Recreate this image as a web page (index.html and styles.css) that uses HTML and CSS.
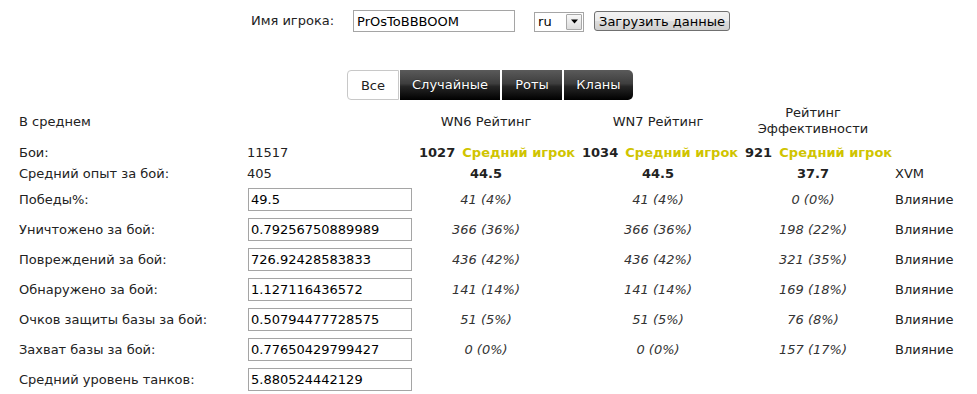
FILE: index.html
```html
<!DOCTYPE html>
<html lang="ru">
<head>
    <meta charset="UTF-8">
    <meta name="viewport" content="width=device-width, initial-scale=1.0">
    <title>Статистика игрока</title>
    <link rel="stylesheet" href="styles.css">
</head>
<body>
    <div class="page">
        <div class="player-form">
            <label class="form-label" for="player">Имя игрока:</label>
            <input class="player-input" type="text" id="player" value="PrOsToBBBOOM">
            <div class="server-select">
                <select id="server">
                    <option>ru</option>
                    <option>eu</option>
                    <option>com</option>
                </select>
                <span class="select-arrow">
                    <svg width="9" height="5" viewBox="0 0 9 5"><path d="M1 0.5h7l-3.5 4z" fill="#000"/></svg>
                </span>
            </div>
            <button class="load-button">Загрузить данные</button>
        </div>

        <div class="tabs">
            <div class="tab active">Все</div>
            <div class="tab random">Случайные</div>
            <div class="tab companies">Роты</div>
            <div class="tab clans">Кланы</div>
        </div>

        <div class="stats">
            <div class="row head-row">
                <div class="cell">В среднем</div>
                <div class="cell"></div>
                <div class="cell center">WN6 Рейтинг</div>
                <div class="cell center">WN7 Рейтинг</div>
                <div class="cell center two-line">Рейтинг<br>Эффективности</div>
                <div class="cell"></div>
            </div>
            <div class="row short-row">
                <div class="cell">Бои:</div>
                <div class="cell">11517</div>
                <div class="cell ratings">
                    <span class="rating"><b>1027</b> <span class="level">Средний игрок</span></span>
                    <span class="rating"><b>1034</b> <span class="level">Средний игрок</span></span>
                    <span class="rating"><b>921</b> <span class="level">Средний игрок</span></span>
                </div>
                <div class="cell"></div>
            </div>
            <div class="row short-row">
                <div class="cell">Средний опыт за бой:</div>
                <div class="cell">405</div>
                <div class="cell center"><b>44.5</b></div>
                <div class="cell center"><b>44.5</b></div>
                <div class="cell center"><b>37.7</b></div>
                <div class="cell xvm">XVM</div>
            </div>
            <div class="row">
                <div class="cell">Победы%:</div>
                <div class="cell"><input class="stat-input" type="text" value="49.5"></div>
                <div class="cell center part">41 (4%)</div>
                <div class="cell center part">41 (4%)</div>
                <div class="cell center part">0 (0%)</div>
                <div class="cell xvm">Влияние</div>
            </div>
            <div class="row">
                <div class="cell">Уничтожено за бой:</div>
                <div class="cell"><input class="stat-input" type="text" value="0.79256750889989"></div>
                <div class="cell center part">366 (36%)</div>
                <div class="cell center part">366 (36%)</div>
                <div class="cell center part">198 (22%)</div>
                <div class="cell xvm">Влияние</div>
            </div>
            <div class="row">
                <div class="cell">Повреждений за бой:</div>
                <div class="cell"><input class="stat-input" type="text" value="726.92428583833"></div>
                <div class="cell center part">436 (42%)</div>
                <div class="cell center part">436 (42%)</div>
                <div class="cell center part">321 (35%)</div>
                <div class="cell xvm">Влияние</div>
            </div>
            <div class="row">
                <div class="cell">Обнаружено за бой:</div>
                <div class="cell"><input class="stat-input" type="text" value="1.127116436572"></div>
                <div class="cell center part">141 (14%)</div>
                <div class="cell center part">141 (14%)</div>
                <div class="cell center part">169 (18%)</div>
                <div class="cell xvm">Влияние</div>
            </div>
            <div class="row">
                <div class="cell">Очков защиты базы за бой:</div>
                <div class="cell"><input class="stat-input" type="text" value="0.50794477728575"></div>
                <div class="cell center part">51 (5%)</div>
                <div class="cell center part">51 (5%)</div>
                <div class="cell center part">76 (8%)</div>
                <div class="cell xvm">Влияние</div>
            </div>
            <div class="row">
                <div class="cell">Захват базы за бой:</div>
                <div class="cell"><input class="stat-input" type="text" value="0.77650429799427"></div>
                <div class="cell center part">0 (0%)</div>
                <div class="cell center part">0 (0%)</div>
                <div class="cell center part">157 (17%)</div>
                <div class="cell xvm">Влияние</div>
            </div>
            <div class="row">
                <div class="cell">Средний уровень танков:</div>
                <div class="cell"><input class="stat-input" type="text" value="5.880524442129"></div>
                <div class="cell"></div>
                <div class="cell"></div>
                <div class="cell"></div>
                <div class="cell"></div>
            </div>
        </div>
    </div>
</body>
</html>
```

FILE: styles.css
```css
body {
    margin: 0;
    font-family: "DejaVu Sans", Verdana, sans-serif;
    font-size: 13px;
    color: #222;
    background-color: #fff;
}

.page {
    padding: 10px 0 0 19px;
}

/* top form */

.player-form {
    display: flex;
    align-items: center;
    justify-content: center;
    height: 22px;
    padding-right: 15px;
}

.form-label {
    margin-right: 19px;
    margin-top: -2px;
}

.player-input {
    box-sizing: border-box;
    width: 162px;
    height: 22px;
    margin: 0 19px 0 0;
    padding: 0 3px;
    border: 1px solid #a5a5a5;
    font-family: inherit;
    font-size: 13px;
    color: #000;
}

.server-select {
    position: relative;
    width: 50px;
    height: 20px;
    margin-right: 10px;
    margin-top: 1px;
}

.server-select select {
    box-sizing: border-box;
    width: 100%;
    height: 100%;
    padding: 0 0 0 3px;
    border: 1px solid #a5a5a5;
    background: #fff;
    font-family: inherit;
    font-size: 13px;
    color: #000;
    appearance: none;
    -webkit-appearance: none;
}

.select-arrow {
    position: absolute;
    top: 2px;
    right: 2px;
    box-sizing: border-box;
    width: 16px;
    height: 16px;
    border: 1px solid #a8a8a8;
    border-radius: 1px;
    background: linear-gradient(#f8f8f8, #dcdcdc);
    display: flex;
    align-items: center;
    justify-content: center;
    pointer-events: none;
}

.load-button {
    box-sizing: border-box;
    width: 136px;
    height: 20px;
    padding: 0;
    border: 1px solid #707070;
    border-radius: 3px;
    background: linear-gradient(#f2f2f2 0%, #ebebeb 50%, #dddddd 51%, #cfcfcf 100%);
    font-family: inherit;
    font-size: 13px;
    color: #000;
    cursor: pointer;
}

/* tabs */

.tabs {
    display: flex;
    justify-content: center;
    gap: 2px;
    margin-top: 38px;
    padding-right: 16px;
}

.tab {
    box-sizing: border-box;
    height: 30px;
    line-height: 30px;
    text-align: center;
    color: #fff;
    background: linear-gradient(#5a5a5a 0%, #3e3e3e 45%, #262626 55%, #000 100%);
    text-shadow: 0 0 1px #000;
}

.tab.active {
    width: 52px;
    margin-right: -1px;
    color: #222;
    background: #fff;
    border: 1px solid #c8c8c8;
    border-radius: 4px 0 0 4px;
    text-shadow: none;
}

.tab.random {
    width: 100px;
}

.tab.companies {
    width: 60px;
}

.tab.clans {
    width: 69px;
    border-radius: 0 5px 5px 0;
}

/* statistics table */

.stats {
    margin-top: 5px;
}

.row {
    display: grid;
    grid-template-columns: 228px 166px 146px 198px 112px 1fr;
    height: 30px;
    align-items: center;
}

.head-row {
    height: 32px;
    margin-bottom: 4px;
}

.short-row {
    height: 22px;
}

.short-row + .short-row {
    height: 21px;
}

.cell {
    white-space: nowrap;
}

.center {
    display: flex;
    justify-content: center;
    text-align: center;
}

.two-line {
    line-height: 16px;
}

.ratings {
    grid-column: 3 / 6;
    display: flex;
    padding-left: 6px;
}

.rating {
    flex: 0 0 163px;
}

.rating b {
    font-weight: bold;
}

.level {
    margin-left: 3px;
    color: #d0c400;
    font-weight: bold;
}

.part {
    font-style: italic;
    color: #333;
}

.xvm {
    padding-left: 26px;
}

.stat-input {
    box-sizing: border-box;
    width: 164px;
    height: 23px;
    margin: 0 0 0 1px;
    padding: 0 2px;
    border: 1px solid #a5a5a5;
    font-family: inherit;
    font-size: 13px;
    color: #000;
}
```
